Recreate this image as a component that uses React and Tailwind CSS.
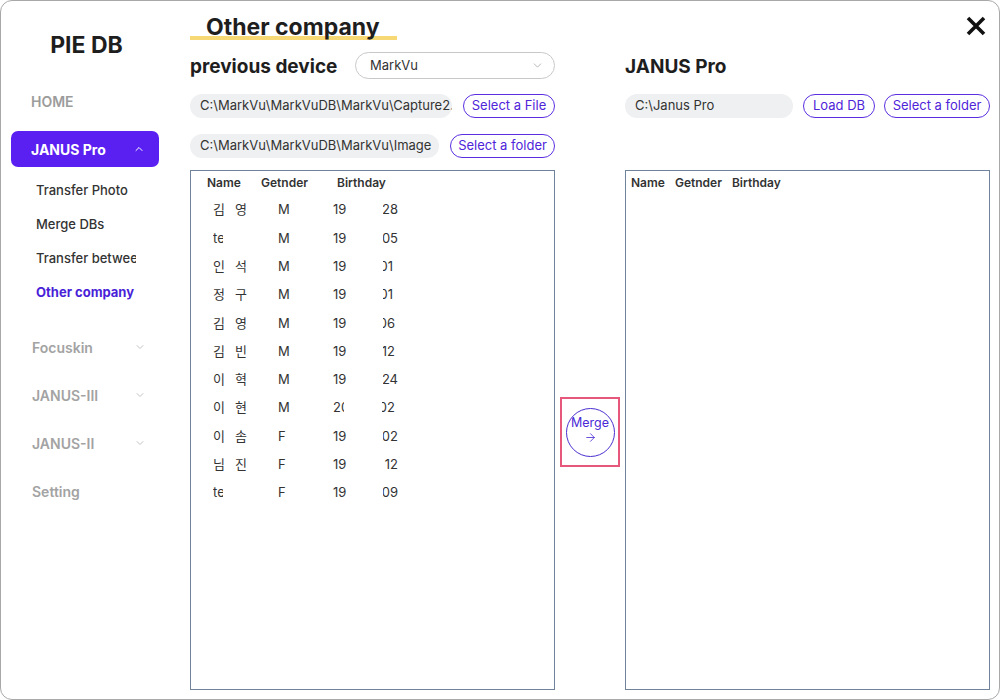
import { ChevronDown, ChevronUp, ArrowRight } from 'lucide-react';

const rows = [
  { a: '김', b: '영', g: 'M', y: '19', s: '28', sw: 15 },
  { a: 'te', b: '', g: 'M', y: '19', s: '05', sw: 15, clipName: true },
  { a: '인', b: '석', g: 'M', y: '19', s: '01', sw: 10 },
  { a: '정', b: '구', g: 'M', y: '19', s: '01', sw: 10 },
  { a: '김', b: '영', g: 'M', y: '19', s: '06', sw: 12 },
  { a: '김', b: '빈', g: 'M', y: '19', s: '12', sw: 12 },
  { a: '이', b: '혁', g: 'M', y: '19', s: '24', sw: 15 },
  { a: '이', b: '현', g: 'M', y: '20', s: '02', sw: 13, clipYear: true },
  { a: '이', b: '솜', g: 'F', y: '19', s: '02', sw: 15 },
  { a: '님', b: '진', g: 'F', y: '19', s: '12', sw: 15 },
  { a: 'te', b: '', g: 'F', y: '19', s: '09', sw: 15, clipName: true },
];

const SubItem = ({ children, active }) => (
  <div
    className={`h-[34px] flex items-center pl-[35px] text-[13px] whitespace-nowrap overflow-hidden w-[135px] ${
      active ? 'font-bold text-[#4a1fd8]' : 'font-medium text-[#333]'
    }`}
  >
    {children}
  </div>
);

const Group = ({ label }) => (
  <div className="h-[48px] flex items-center justify-between pl-[31px] pr-[14px] w-[159px] text-[14px] font-semibold text-[#a3a3a3]">
    <span>{label}</span>
    <ChevronDown size={12} strokeWidth={1.5} className="text-[#b0b0b0]" />
  </div>
);

const PillButton = ({ children, w }) => (
  <button className={`h-[24px] ${w} rounded-full border border-[#5a2ee0] text-[#4f25d9] text-[13px] flex items-center justify-center whitespace-nowrap`}>
    {children}
  </button>
);

const PathBox = ({ children, w }) => (
  <div className={`h-[24px] ${w} rounded-full bg-[#eef0f2] text-[13px] text-[#333] pl-[10px] flex items-center whitespace-nowrap overflow-hidden`}>
    {children}
  </div>
);

const App = () => {
  return (
    <div className="w-[1000px] h-[700px] bg-white" style={{ fontFamily: 'Inter, "Noto Sans CJK KR", sans-serif' }}>
      <div className="w-full h-full border border-[#a8a8a8] rounded-[12px] flex overflow-hidden">
        {/* sidebar */}
        <div className="w-[189px] shrink-0 flex flex-col">
          <div className="h-[86px] flex items-center justify-center pr-[18px] pt-[2px] text-[23px] font-bold text-[#1e1e1e]">
            PIE DB
          </div>
          <div className="h-[28px] flex items-center pl-[30px] text-[14px] font-semibold text-[#9c9c9c]">HOME</div>
          <div className="mt-[16px] ml-[10px] w-[148px] h-[36px] rounded-[7px] bg-[#5a20f2] flex items-center justify-between pl-[20px] pr-[14px] text-white text-[14px] font-bold">
            <span>JANUS Pro</span>
            <ChevronUp size={12} strokeWidth={2} />
          </div>
          <div className="mt-[7px] flex flex-col">
            <SubItem>Transfer Photo</SubItem>
            <SubItem>Merge DBs</SubItem>
            <SubItem>Transfer between</SubItem>
            <SubItem active>Other company</SubItem>
          </div>
          <div className="mt-[13px] flex flex-col">
            <Group label="Focuskin" />
            <Group label="JANUS-III" />
            <Group label="JANUS-II" />
            <div className="h-[48px] flex items-center pl-[31px] text-[14px] font-semibold text-[#a3a3a3]">Setting</div>
          </div>
        </div>

        {/* main */}
        <div className="flex-1 flex flex-col pr-[9px]">
          <div className="h-[50px] flex items-start justify-between">
            <div className="mt-[9px] px-[16px] pt-[4px] text-[23px] font-bold text-[#1e1e1e] leading-[26px] border-b-[4px] border-[#f6d874] h-[30px] w-[207px] whitespace-nowrap">
              Other company
            </div>
            <svg width="20" height="20" viewBox="0 0 20 20" className="mt-[15px] mr-[4px]">
              <path d="M2 2 L18 18 M18 2 L2 18" stroke="#111" strokeWidth="3.6" strokeLinecap="butt" />
            </svg>
          </div>

          <div className="grid grid-cols-[365px_70px_365px] grid-rows-[27px_24px_24px_519px] gap-y-[15px] mt-[1px]">
            {/* row 1 */}
            <div className="flex items-center justify-between">
              <span className="text-[19px] font-bold text-[#1e1e1e] pt-[3px]">previous device</span>
              <div className="w-[200px] h-[27px] rounded-full border border-[#c8c8c8] flex items-center justify-between pl-[14px] pr-[10px] text-[13px] text-[#333]">
                <span>MarkVu</span>
                <ChevronDown size={13} strokeWidth={1.5} className="text-[#a8a8a8]" />
              </div>
            </div>
            <div />
            <div className="flex items-center text-[19px] font-bold text-[#1e1e1e] pt-[3px]">JANUS Pro</div>

            {/* row 2 */}
            <div className="flex items-center justify-between">
              <PathBox w="w-[262px]">C:\MarkVu\MarkVuDB\MarkVu\Capture2.avi</PathBox>
              <PillButton w="w-[92px]">Select a File</PillButton>
            </div>
            <div />
            <div className="flex items-center">
              <PathBox w="w-[168px]">C:\Janus Pro</PathBox>
              <div className="ml-[10px]"><PillButton w="w-[72px]">Load DB</PillButton></div>
              <div className="ml-[9px]"><PillButton w="w-[106px]">Select a folder</PillButton></div>
            </div>

            {/* row 3 */}
            <div className="flex items-center justify-between mt-[1px]">
              <PathBox w="w-[249px]">C:\MarkVu\MarkVuDB\MarkVu\Image</PathBox>
              <PillButton w="w-[105px]">Select a folder</PillButton>
            </div>
            <div />
            <div />

            {/* tables */}
            <div className="border border-[#6f849c] -mt-[2px] h-[520px]">
              <div className="h-[24px] flex items-center text-[12px] font-semibold text-[#333] pl-[16px]">
                <div className="w-[54px]">Name</div>
                <div className="w-[76px]">Getnder</div>
                <div>Birthday</div>
              </div>
              <div className="pt-[1px]">
                {rows.map((r, i) => (
                  <div key={i} className="h-[28.3px] flex items-center text-[13px] text-[#333]">
                    <div className="w-[73px] pl-[22px] flex gap-[10px]">
                      {r.clipName ? (
                        <span className="w-[10px] overflow-hidden whitespace-nowrap">te</span>
                      ) : (
                        <>
                          <span>{r.a}</span>
                          <span>{r.b}</span>
                        </>
                      )}
                    </div>
                    <div className="w-[69px] pl-[14px]">{r.g}</div>
                    <div className="flex items-center">
                      <span className={r.clipYear ? 'w-[11px] overflow-hidden' : 'w-[12px]'}>{r.y}</span>
                      <span className="w-[38px]" />
                      <span className="overflow-hidden flex justify-end" style={{ width: r.sw }}>
                        <span className="shrink-0">{r.s}</span>
                      </span>
                    </div>
                  </div>
                ))}
              </div>
            </div>

            <div className="flex items-center justify-center -mt-[2px]">
              <div className="w-[60px] h-[70px] border-2 border-[#e7577b] flex items-center justify-center mt-[3px]">
                <div className="w-[49px] h-[49px] shrink-0 rounded-full border border-[#4b2fd0] flex flex-col items-center justify-center text-[#4a2bd6] text-[12.5px] leading-[14px] pb-[5px] overflow-hidden">
                  <span className="whitespace-nowrap">Merge</span>
                  <ArrowRight size={13} strokeWidth={1.5} className="mt-[1px]" />
                </div>
              </div>
            </div>

            <div className="border border-[#6f849c] -mt-[2px] h-[520px]">
              <div className="h-[24px] flex items-center gap-[10px] pl-[5px] text-[12px] font-semibold text-[#333]">
                <span>Name</span>
                <span>Getnder</span>
                <span>Birthday</span>
              </div>
            </div>
          </div>
        </div>
      </div>
    </div>
  );
};

export default App;
